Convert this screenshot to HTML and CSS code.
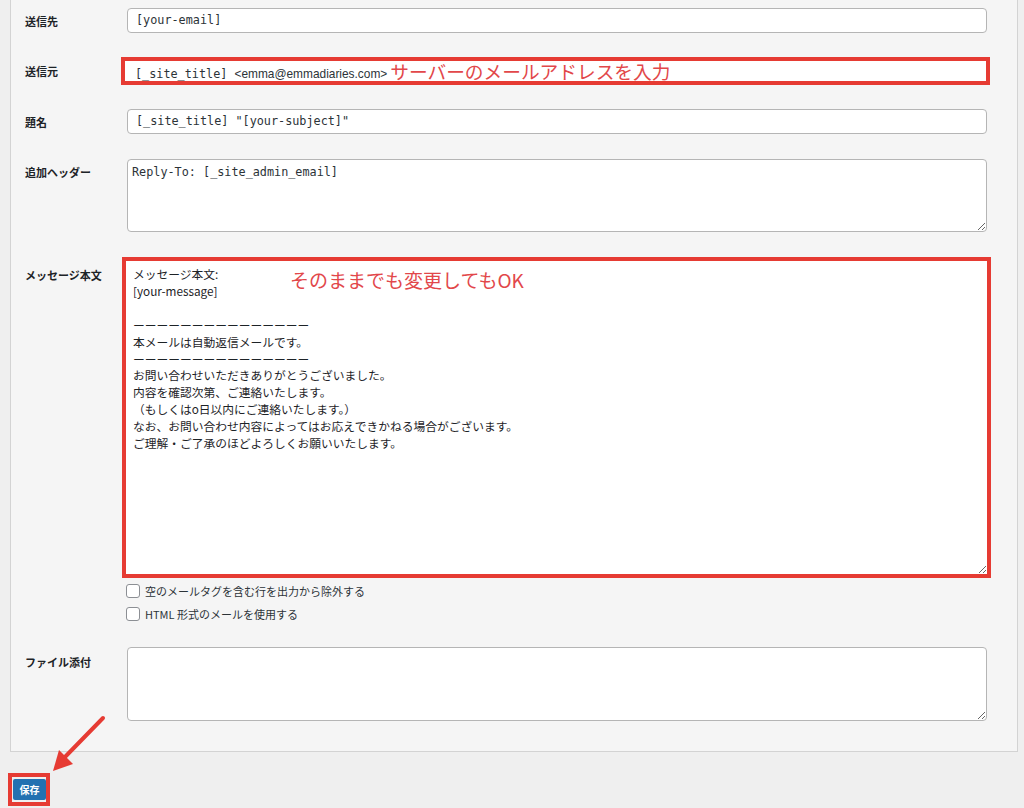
FILE: index.html
```html
<!DOCTYPE html>
<html lang="ja">
<head>
<meta charset="utf-8">
<title>メール設定</title>
<link rel="stylesheet" href="styles.css">
</head>
<body>
<div class="panel">
  <div class="row">
    <div class="label">送信先</div>
    <div class="field input">[your-email]</div>
  </div>
  <div class="row">
    <div class="label">送信元</div>
    <div class="field input marked"><span class="mono">[_site_title] </span><span class="addr">&lt;emma@emmadiaries.com&gt;</span><span class="note">サーバーのメールアドレスを入力</span></div>
  </div>
  <div class="row r3">
    <div class="label">題名</div>
    <div class="field input">[_site_title] "[your-subject]"</div>
  </div>
  <div class="row">
    <div class="label">追加ヘッダー</div>
    <textarea class="field area header-area" readonly>Reply-To: [_site_admin_email]</textarea>
  </div>
  <div class="row msg-row">
    <div class="label msg-label">メッセージ本文</div>
    <div class="msg-wrap">
      <textarea class="field area msg" readonly>メッセージ本文:
[your-message]

ーーーーーーーーーーーーーーー
本メールは自動返信メールです。
ーーーーーーーーーーーーーーー
お問い合わせいただきありがとうございました。
内容を確認次第、ご連絡いたします。
（もしくはo日以内にご連絡いたします。）
なお、お問い合わせ内容によってはお応えできかねる場合がございます。
ご理解・ご了承のほどよろしくお願いいたします。</textarea>
      <span class="note msg-note">そのままでも変更してもOK</span>
    </div>
  </div>
  <div class="options">
    <label class="opt"><span class="cb"></span>空のメールタグを含む行を出力から除外する</label>
    <label class="opt"><span class="cb"></span>HTML 形式のメールを使用する</label>
  </div>
  <div class="row last">
    <div class="label">ファイル添付</div>
    <textarea class="field area file-area" readonly></textarea>
  </div>
</div>
<div class="save-box"><button class="save">保存</button></div>
<svg class="arrow" width="80" height="80" viewBox="0 0 80 80">
  <line x1="63" y1="13" x2="24" y2="53" stroke="#e63b33" stroke-width="4" stroke-linecap="round"/>
  <polygon points="13,66 33,59 19,45" fill="#e63b33"/>
</svg>
</body>
</html>
```
FILE: styles.css
```css
html, body {
  margin: 0;
  padding: 0;
  overflow: hidden;
}
body {
  background: #efefef;
  font-family: "Noto Sans CJK JP", "Noto Sans", sans-serif;
  color: #1d2327;
  position: relative;
  width: 1024px;
  height: 808px;
}
.panel {
  margin-left: 10px;
  background: #f5f5f5;
  border: 1px solid #d3d3d3;
  border-top: none;
  padding: 8px 30px 30px 14px;
  box-sizing: content-box;
  width: 962px;
}
.row {
  display: grid;
  grid-template-columns: 102px 1fr;
  margin-bottom: 25px;
}
.row.r3 { margin-top: -1px; }
.label {
  font-size: 11px;
  font-weight: 700;
  line-height: 14px;
  padding-top: 6px;
}
.field {
  background: #fff;
  border: 1px solid #b5b5b5;
  border-radius: 4px;
  box-sizing: border-box;
}
.input {
  height: 25px;
  padding: 0 8px;
  font-family: "DejaVu Sans Mono", "Liberation Mono", monospace;
  font-size: 11.8px;
  line-height: 23px;
  color: #2c3338;
  white-space: pre;
  overflow: hidden;
}
.input.marked {
  height: 28px;
  margin: -1px -3px 0 -6px;
  border: 4px solid #e63b33;
  border-radius: 0;
  padding-left: 10px;
  line-height: 20px;
}
.addr {
  font-family: "Liberation Sans", Arial, sans-serif;
  font-size: 11.9px;
  color: #2c3338;
}
.note {
  font-family: "Noto Sans CJK JP", sans-serif;
  color: #e2474a;
  font-weight: 400;
}
.input .note {
  font-size: 18.7px;
  margin-left: 3px;
  vertical-align: -1px;
}
.area {
  display: block;
  width: 100%;
  resize: vertical;
  font-family: "DejaVu Sans Mono", "Liberation Mono", monospace;
  font-size: 11.8px;
  line-height: 17px;
  color: #2c3338;
  padding: 4px 4px;
  margin: 0;
  outline: none;
}
.header-area { height: 73px; }
.msg-row { margin-bottom: 6px; }
.msg-label { padding-top: 11px; }
.msg-wrap {
  position: relative;
  margin: 0 -4px 0 -5px;
}
.area.msg {
  height: 321px;
  border: 4px solid #e63b33;
  border-radius: 0;
  font-family: "Noto Sans CJK JP", sans-serif;
  font-size: 11.75px;
  line-height: 16.9px;
  padding: 5px 7px;
  color: #1d2327;
  overflow: hidden;
}
.msg-note {
  position: absolute;
  left: 168px;
  top: 11px;
  font-size: 19px;
  line-height: 24px;
}
.options {
  margin-left: 101px;
  display: flex;
  flex-direction: column;
  gap: 9px;
  margin-bottom: 26px;
}
.opt {
  display: flex;
  align-items: center;
  font-size: 11px;
  line-height: 14px;
  color: #2c3338;
}
.cb {
  width: 14px;
  height: 14px;
  box-sizing: border-box;
  border: 1px solid #8c8f94;
  border-radius: 3px;
  background: #fff;
  margin-right: 5px;
}
.row.last { margin-bottom: 0; }
.file-area { height: 74px; }
.row.last .label { padding-top: 8px; }
.save-box {
  display: inline-block;
  margin: 21px 0 0 8px;
  border: 4px solid #e63b33;
  padding: 2px 0 2px 1px;
}
.save {
  display: block;
  width: 33px;
  height: 21px;
  padding: 0;
  border: none;
  border-radius: 2px;
  background: #2271b1;
  color: #fff;
  font-family: "Noto Sans CJK JP", sans-serif;
  font-size: 10px;
  font-weight: 700;
  line-height: 21px;
  text-align: center;
}
.arrow {
  position: absolute;
  left: 40px;
  top: 705px;
}
```
